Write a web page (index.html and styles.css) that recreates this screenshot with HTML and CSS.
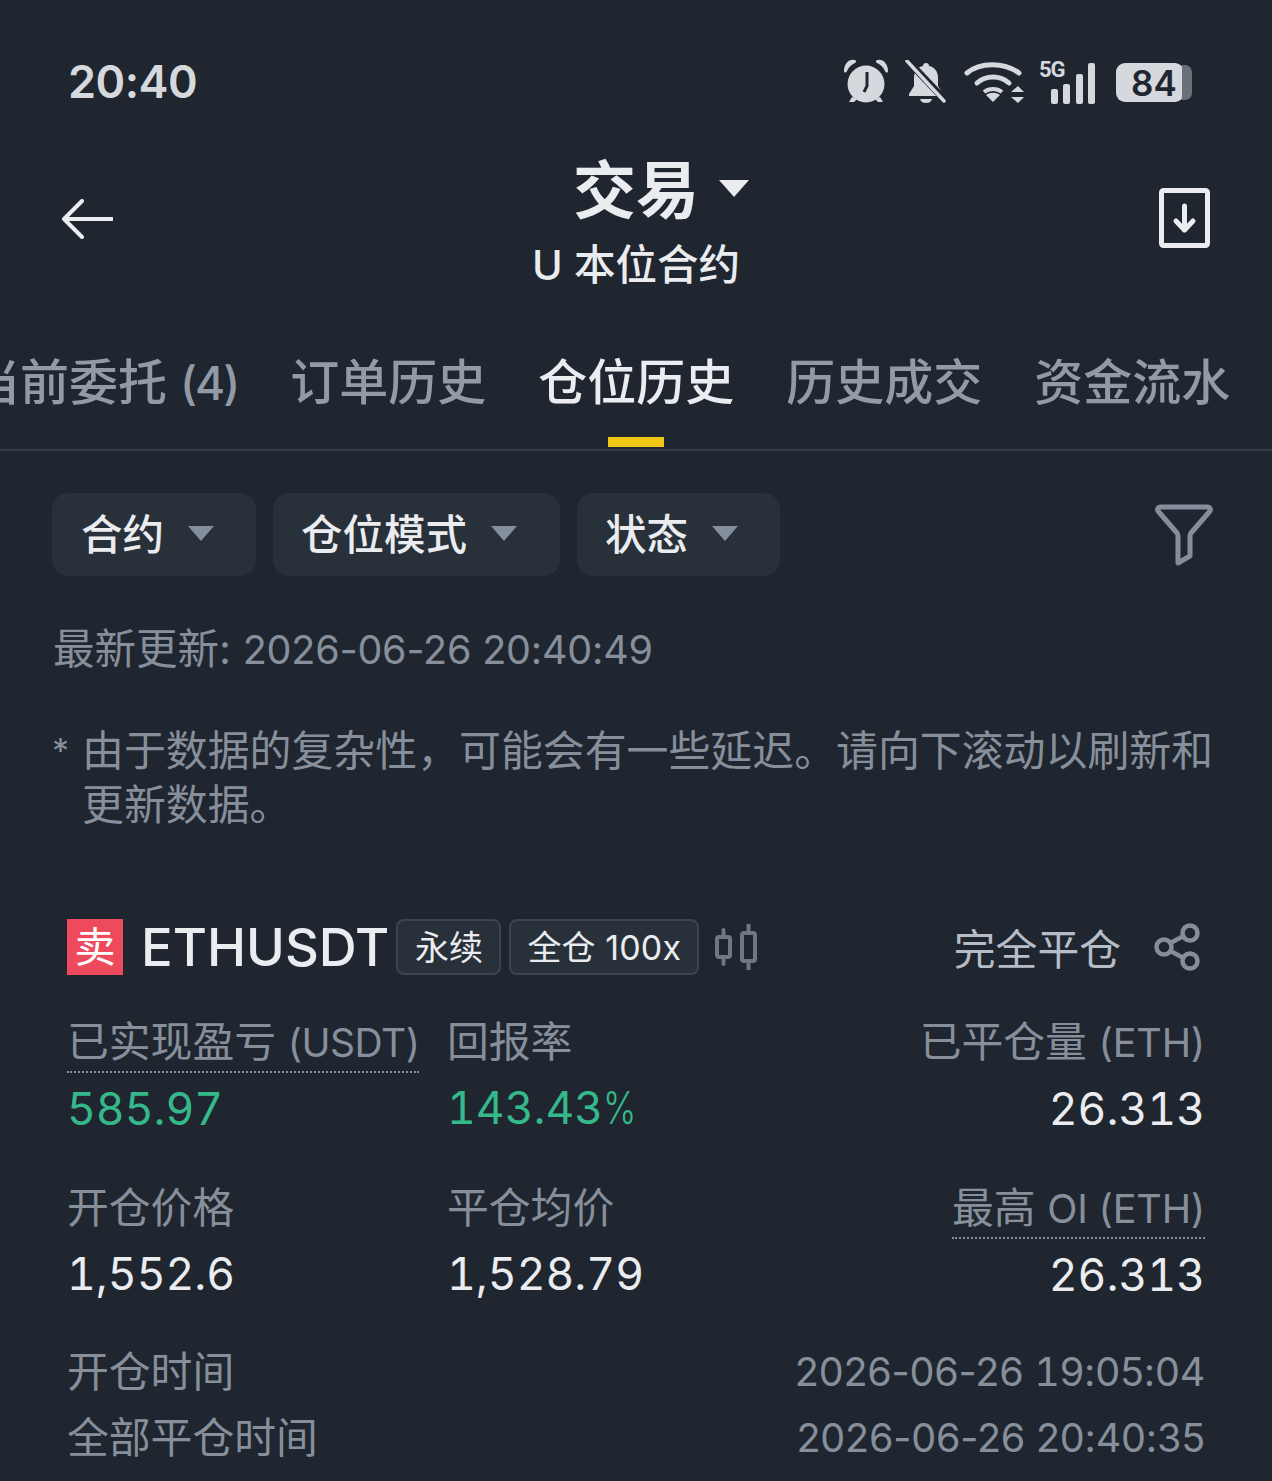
FILE: index.html
```html
<!DOCTYPE html>
<html lang="zh-CN">
<head>
<meta charset="utf-8">
<title>仓位历史</title>
<link rel="stylesheet" href="styles.css">
</head>
<body>
<div class="status">
  <div class="clock">20:40</div>
  <div class="status-icons">
    <svg class="ic-alarm" width="46" height="46" viewBox="0 0 46 46"><path d="M1 12C1 5 6 0 11 1c2 0 3 2 1 3-4 2-6 4-8 8-1 2-3 2-3 0zM45 12c0-7-5-12-10-11-2 0-3 2-1 3 4 2 6 4 8 8 1 2 3 2 3 0z" fill="#d5d8dc"/><circle cx="23" cy="25" r="18.500" fill="#d5d8dc"/><path d="M9 38l-3 5 5 0 3-3zM37 38l3 5-5 0-3-3z" fill="#d5d8dc"/><path d="M24 13v14l-3 6" fill="none" stroke="#1f2630" stroke-width="3"/></svg>
    <svg class="ic-bell" width="42" height="44" viewBox="0 0 42 44"><path d="M21 3c2 0 3 1 3 3 6 1 9 6 9 12v8l5 8v2H4v-2l5-8v-8c0-6 3-11 9-12 0-2 1-3 3-3z" fill="#d5d8dc"/><path d="M15 39h12c-1 3-3 4-6 4s-5-1-6-4z" fill="#d5d8dc"/><path d="M2 0l38 40" stroke="#1f2630" stroke-width="7"/><path d="M2 1l37 40" stroke="#d5d8dc" stroke-width="3.500" stroke-linecap="round"/></svg>
    <svg class="ic-wifi" width="60" height="44" viewBox="0 0 60 44"><g fill="none" stroke="#d5d8dc" stroke-width="5" stroke-linecap="round"><path d="M3 13C16 2 40 2 55 13"/><path d="M13 23c9-8 23-8 32 0"/></g><path d="M20 32c5-4 13-4 18 0"  fill="none" stroke="#d5d8dc" stroke-width="4"/><path d="M22 35c4-3 10-3 14 0l-7 7z" fill="#d5d8dc"/><path d="M54 26l6 6H47zM54 43l6-6H47z" fill="#d5d8dc"/></svg>
    <div class="signal">
      <span class="five-g">5G</span>
      <div class="bars"><i class="b1"></i><i class="b2"></i><i class="b3"></i><i class="b4"></i></div>
    </div>
    <div class="battery"><span class="battery-body">84</span><i class="battery-cap"></i></div>
  </div>
</div>

<header class="topbar">
  <svg class="ic-back" width="52" height="40" viewBox="0 0 52 40"><path d="M51 20H3M21 2L3 20l18 18" fill="none" stroke="#eaecef" stroke-width="4" stroke-linecap="round" stroke-linejoin="round"/></svg>
  <div class="title-block">
    <div class="title"><span>交易</span><i class="title-caret"></i></div>
    <div class="subtitle">U 本位合约</div>
  </div>
  <svg class="ic-download" width="52" height="60" viewBox="0 0 52 60"><rect x="2.500" y="2.500" width="46" height="55" rx="2" fill="none" stroke="#eaecef" stroke-width="5"/><path d="M25.500 18v24M17 33l8.500 9 8.500-9" fill="none" stroke="#eaecef" stroke-width="5" stroke-linecap="round" stroke-linejoin="round"/></svg>
</header>

<nav class="tabs">
  <div class="tab">当前委托 <span class="tab-count">(4)</span></div>
  <div class="tab">订单历史</div>
  <div class="tab active">仓位历史</div>
  <div class="tab">历史成交</div>
  <div class="tab">资金流水</div>
</nav>

<section class="filters">
  <div class="chip chip-a">合约<i class="caret"></i></div>
  <div class="chip chip-b">仓位模式<i class="caret"></i></div>
  <div class="chip chip-c">状态<i class="caret"></i></div>
  <svg class="ic-funnel" width="60" height="62" viewBox="0 0 60 62"><path d="M6 3h48c2 0 3 2 2 4L37 29c-1 1-1 2-1 3v20L24 59V32c0-1 0-2-1-3L4 7C3 5 4 3 6 3z" fill="none" stroke="#848e9c" stroke-width="5" stroke-linejoin="round"/></svg>
</section>

<p class="updated">最新更新: <span class="num">2026-06-26 20:40:49</span></p>
<div class="notice"><span class="star">*</span><p>由于数据的复杂性，可能会有一些延迟。请向下滚动以刷新和更新数据。</p></div>

<article class="card">
  <div class="card-head">
    <span class="side">卖</span>
    <span class="symbol">ETHUSDT</span>
    <span class="tag tag-a">永续</span>
    <span class="tag tag-b">全仓 <span class="lev">100x</span></span>
    <svg class="ic-candle" width="44" height="46" viewBox="0 0 44 46"><g fill="none" stroke="#6f7783" stroke-width="4"><rect x="3" y="13" width="13" height="20" rx="2"/><rect x="28" y="9" width="13" height="28" rx="2"/></g><path d="M9.500 6v7M9.500 33v7M34.500 1v8M34.500 37v8" stroke="#6f7783" stroke-width="4" stroke-linecap="round"/></svg>
    <span class="close-state">完全平仓</span>
    <svg class="ic-share" width="48" height="48" viewBox="0 0 48 48"><g fill="none" stroke="#848e9c" stroke-width="4.500"><circle cx="36" cy="10" r="7.500"/><circle cx="10" cy="24" r="7.500"/><circle cx="36" cy="38" r="7.500"/><path d="M16.500 20L29.500 13M16.500 28l13 7"/></g></svg>
  </div>

  <div class="grid">
    <div class="cell"><span class="label dotted">已实现盈亏 <span class="num usdt">(USDT)</span></span><span class="value green">585.97</span></div>
    <div class="cell"><span class="label">回报率</span><span class="value green">143.43<span class="pct">%</span></span></div>
    <div class="cell right"><span class="label">已平仓量 <span class="num">(ETH)</span></span><span class="value">26.313</span></div>

    <div class="cell"><span class="label">开仓价格</span><span class="value">1,552.6</span></div>
    <div class="cell"><span class="label">平仓均价</span><span class="value">1,528.79</span></div>
    <div class="cell right"><span class="label dotted">最高 <span class="num">OI (ETH)</span></span><span class="value">26.313</span></div>
  </div>

  <div class="time-row first"><span>开仓时间</span><span class="num">2026-06-26 <span class="tab-digit">1</span>9:05:04</span></div>
  <div class="time-row"><span>全部平仓时间</span><span class="num">2026-06-26 20:40:35</span></div>
</article>
</body>
</html>
```

FILE: styles.css
```css
* { box-sizing: border-box; }
html, body { margin: 0; padding: 0; }
body {
  width: 1272px;
  height: 1481px;
  overflow: hidden;
  background: #1f2630;
  color: #eaecef;
  font-family: "Inter", "Noto Sans CJK SC", sans-serif;
}
p { margin: 0; }

.status {
  height: 154px;
  padding: 55px 80px 0 68px;
  display: flex;
  justify-content: space-between;
  align-items: flex-start;
}
.clock { font-size: 45px; font-weight: 600; line-height: 54px; color: #d5d8dc; letter-spacing: -0.5px; }
.status-icons { display: flex; align-items: center; height: 56px; margin-top: -1px; }
.ic-alarm { margin-right: 16px; }
.ic-bell { margin-right: 17px; }
.ic-wifi { margin-right: 14px; }
.signal { position: relative; width: 57px; height: 44px; margin-right: 21px; }
.five-g { position: absolute; left: 1px; top: -3px; font-family: "Roboto", sans-serif; font-weight: 700; font-size: 22px; line-height: 26px; color: #d5d8dc; letter-spacing: -1px; }
.bars { position: absolute; inset: 0; display: flex; align-items: flex-end; justify-content: flex-end; gap: 5.500px; }
.bars i { display: block; width: 7px; background: #d5d8dc; border-radius: 2px; }
.b1 { height: 15px; }
.b2 { height: 20px; }
.b3 { height: 30px; }
.b4 { height: 41px; }
.battery { display: flex; align-items: center; }
.battery-body { display: block; width: 68px; height: 39px; border-radius: 9px; background: #d5d8dc; color: #1f2630; font-size: 35px; font-weight: 600; line-height: 40px; padding-left: 15px; }
.battery-cap { display: block; width: 10px; height: 35px; margin-left: -2px; background: #6b7078; border-radius: 0 7px 7px 0; }

.topbar {
  height: 150px;
  padding: 0 61px;
  display: flex;
  align-items: flex-start;
  justify-content: space-between;
}
.ic-back { margin-top: 45px; }
.ic-download { margin-top: 34px; }
.title-block { display: flex; flex-direction: column; align-items: center; }
.title { display: flex; align-items: center; height: 72px; margin-left: 50px; font-size: 63px; font-weight: 700; line-height: 72px; }
.title-caret { display: block; width: 0; height: 0; margin-left: 20px; margin-top: -4px; border: 15px solid transparent; border-top: 17px solid #eaecef; border-bottom: 0; }
.subtitle { font-size: 41.500px; font-weight: 500; line-height: 50px; margin-top: 14px; }

.tabs {
  height: 147px;
  margin-left: -29px;
  width: 1301px;
  display: flex;
  gap: 52px;
  overflow: hidden;
  white-space: nowrap;
  border-bottom: 2px solid #353c47;
}
.tab { font-size: 49px; font-weight: 500; line-height: 60px; padding-top: 49px; color: #929aa5; position: relative; height: 143px; flex: none; }
.tab-count { font-size: 46px; letter-spacing: -2px; }
.tab.active { color: #eaecef; }
.tab.active::after { content: ""; position: absolute; left: 70px; bottom: 0; width: 56px; height: 10px; background: #f0c814; }

.filters { display: flex; align-items: center; gap: 17px; padding: 42px 58px 0 52px; height: 125px; }
.chip { height: 83px; border-radius: 16px; background: #28303a; display: flex; align-items: center; padding-bottom: 6px; font-size: 41.500px; font-weight: 500; color: #eaecef; }
.chip-a { width: 204px; padding-left: 29px; }
.chip-b { width: 287px; padding-left: 28px; }
.chip-c { width: 203px; padding-left: 28px; }
.caret { display: block; width: 0; height: 0; margin-left: 24px; margin-top: 4px; border: 13px solid transparent; border-top: 15px solid #848e9c; border-bottom: 0; }
.ic-funnel { margin-left: auto; margin-top: 1px; }

.updated { margin: 47px 0 0 53px; font-size: 41.500px; line-height: 52px; color: #878f9b; }
.notice { display: flex; padding: 48px 50px 0 52px; font-size: 41.900px; line-height: 54px; color: #878f9b; }
.star { width: 30px; flex: none; font-size: 34px; }
.notice p { flex: 1; }

.card { padding: 0 67px; }
.card-head { display: flex; align-items: center; height: 56px; margin-top: 87px; }
.side { width: 56px; height: 56px; background: #ee4a5e; color: #fff; font-size: 41px; line-height: 56px; text-align: center; flex: none; }
.symbol { margin-left: 18px; font-size: 52.500px; font-weight: 500; line-height: 58px; color: #eaecef; }
.tag { height: 56px; border: 2px solid #3c444f; border-radius: 8px; background: #28303a; font-size: 34px; line-height: 54px; color: #eaecef; flex: none; text-align: center; }
.tag-a { width: 105px; margin-left: 7px; }
.tag-b { width: 190px; margin-left: 8px; }
.lev { letter-spacing: 0.200px; }
.ic-candle { margin-left: 15px; flex: none; }
.close-state { margin-left: auto; font-size: 41.800px; color: #b7bdc6; }
.ic-share { margin-left: 33px; margin-right: 3px; flex: none; }

.grid { display: grid; grid-template-columns: 380px 1fr auto; row-gap: 43px; margin-top: 39px; }
.cell { display: flex; flex-direction: column; align-items: flex-start; }
.cell.right { align-items: flex-end; }
.label { font-size: 41.800px; line-height: 56px; color: #878f9b; white-space: nowrap; }
.label.dotted { border-bottom: 2px dotted #848e9c; }
.value { font-size: 44.500px; line-height: 56px; margin-top: 10px; color: #eaecef; font-variant-numeric: tabular-nums; }
.label.dotted + .value { margin-top: 8px; }
.value.green { color: #35b88a; }
.pct { display: inline-block; width: 31px; font-weight: 300; transform: scaleX(0.8); transform-origin: left center; }
.num { font-size: 39.500px; letter-spacing: -0.200px; }
.num.usdt { font-size: 39px; letter-spacing: -0.500px; }
.tab-digit { font-variant-numeric: tabular-nums; }

.time-row { display: flex; justify-content: space-between; font-size: 41.800px; line-height: 66px; color: #878f9b; }
.time-row.first { margin-top: 36px; }
```
